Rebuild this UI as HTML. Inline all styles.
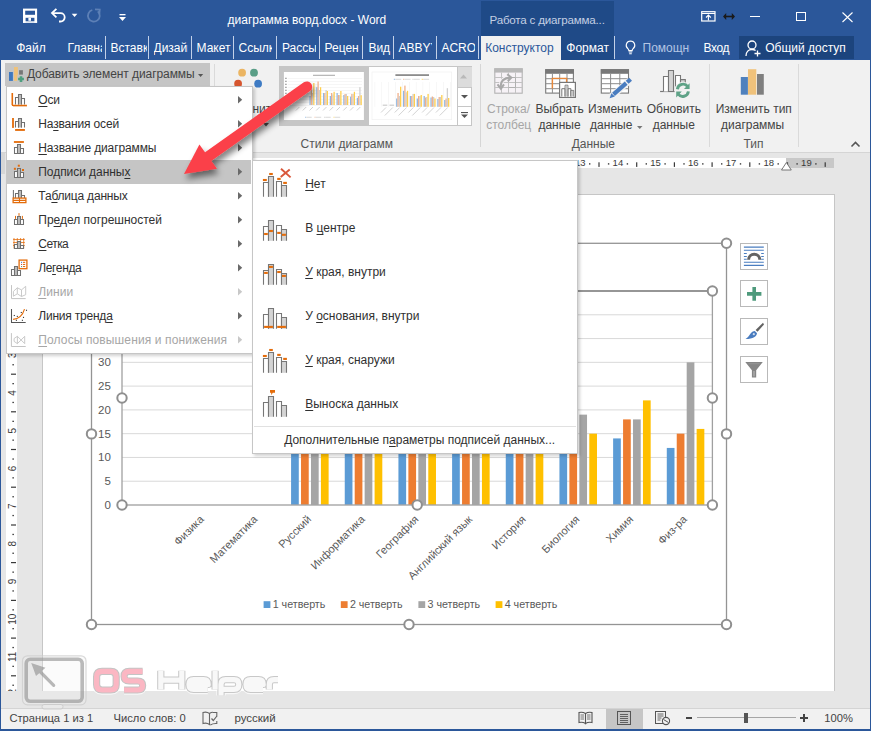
<!DOCTYPE html><html><head><meta charset="utf-8"><style>
html,body{margin:0;padding:0;}
body{width:871px;height:731px;overflow:hidden;position:relative;background:#e6e6e6;font-family:"Liberation Sans",sans-serif;}
.t{position:absolute;white-space:nowrap;font-family:"Liberation Sans",sans-serif;}
svg{overflow:visible}
</style></head><body>
<div style="position:absolute;left:0px;top:0px;width:871px;height:60px;background:#2b579a"></div>
<div style="position:absolute;left:481px;top:1px;width:133px;height:59px;background:#1f4a87"></div>
<div class="t" style="left:489.5px;top:13.88px;font-size:11.6px;line-height:11.6px;color:#c3cfe3;letter-spacing:-0.2px">Работа с диаграмма...</div>
<svg style="position:absolute;left:0px;top:0px;" width="130" height="30" viewBox="0 0 130 30"><rect x="23" y="8.6" width="14.1" height="14.2" fill="#fff"/><rect x="25.2" y="10.7" width="9.8" height="4.1" fill="#2b579a"/><rect x="25.6" y="17.8" width="8.8" height="5" fill="#2b579a"/><rect x="28.4" y="17.8" width="2.6" height="3" fill="#fff"/><rect x="23" y="21.3" width="14.1" height="1.5" fill="#fff"/><path d="M52 13.1 H60.5 A4.2 4.2 0 0 1 60.5 21.5 H59" fill="none" stroke="#fff" stroke-width="1.8"/><path d="M56.4 8.9 L52 13.1 L56.4 17.3" fill="none" stroke="#fff" stroke-width="1.8"/><path d="M71.7 13.8 h5.7 l-2.85 3.1z" fill="#fff"/><path d="M97.8 11.3 A5.9 5.9 0 1 1 92.3 10" fill="none" stroke="#5d80b6" stroke-width="1.8"/><path d="M95 9.4 L99.8 9.6 L99.3 14.3" fill="none" stroke="#5d80b6" stroke-width="1.7"/></svg>
<svg style="position:absolute;left:119px;top:14px;" width="7" height="8" viewBox="0 0 7 8"><rect x="0.5" y="0" width="6" height="1.3" fill="#fff"/><path d="M0 3h7l-3.5 4z" fill="#fff"/></svg>
<div class="t" style="left:227.5px;top:14.04px;font-size:12px;line-height:12px;color:#fff;">диаграмма ворд.docx - Word</div>
<svg style="position:absolute;left:701px;top:11px;" width="15" height="11" viewBox="0 0 15 11"><rect x="0.7" y="0.7" width="13.3" height="9.3" fill="none" stroke="#fff" stroke-width="1.2"/><path d="M1 2.5h13" stroke="#fff" stroke-width="1"/><path d="M7.4 9.5v-5 M5 6.5l2.4-2.4 2.4 2.4" stroke="#fff" stroke-width="1.1" fill="none"/></svg>
<svg style="position:absolute;left:723px;top:12px;" width="12" height="9" viewBox="0 0 12 9"><path d="M2.5 4.5h7" stroke="#1a1a1a" stroke-width="1.6"/><path d="M0 4.5l3.2-3.5v7z M12 4.5l-3.2-3.5v7z" fill="#1a1a1a"/></svg>
<div style="position:absolute;left:749.5px;top:16px;width:10.5px;height:1px;background:#fff"></div>
<div style="position:absolute;left:796px;top:11.5px;width:10px;height:9.5px;border:1px solid #fff;box-sizing:border-box"></div>
<svg style="position:absolute;left:841.5px;top:11.5px;" width="11" height="10" viewBox="0 0 11 10"><path d="M0.5 0.5l10 9.5 M10.5 0.5l-10 9.5" stroke="#fff" stroke-width="1.1"/></svg>
<div class="t" style="left:16.2px;top:41.84px;font-size:12px;line-height:12px;color:#fff;">Файл</div>
<div class="t" style="left:67.4px;top:39.8px;width:34.599999999999994px;overflow:hidden;font-size:12px;line-height:16px;color:#fff">Главная</div>
<div class="t" style="left:110.5px;top:39.8px;width:36.0px;overflow:hidden;font-size:12px;line-height:16px;color:#fff">Вставка</div>
<div class="t" style="left:153.5px;top:39.8px;width:34.0px;overflow:hidden;font-size:12px;line-height:16px;color:#fff">Дизайн</div>
<div class="t" style="left:196.5px;top:39.8px;width:34.5px;overflow:hidden;font-size:12px;line-height:16px;color:#fff">Макет</div>
<div class="t" style="left:238.5px;top:39.8px;width:33.5px;overflow:hidden;font-size:12px;line-height:16px;color:#fff">Ссылки</div>
<div class="t" style="left:282px;top:39.8px;width:33.5px;overflow:hidden;font-size:12px;line-height:16px;color:#fff">Рассылки</div>
<div class="t" style="left:324.5px;top:39.8px;width:34.0px;overflow:hidden;font-size:12px;line-height:16px;color:#fff">Рецензирование</div>
<div class="t" style="left:368.4px;top:41.84px;font-size:12px;line-height:12px;color:#fff;">Вид</div>
<div class="t" style="left:398.4px;top:39.8px;width:33.60000000000002px;overflow:hidden;font-size:12px;line-height:16px;color:#fff">ABBYY FineReader</div>
<div class="t" style="left:441.4px;top:39.8px;width:34.10000000000002px;overflow:hidden;font-size:12px;line-height:16px;color:#fff">ACROBAT</div>
<div style="position:absolute;left:105px;top:36.3px;width:1px;height:22.7px;background:#c3d1e8"></div>
<div style="position:absolute;left:148px;top:36.3px;width:1px;height:22.7px;background:#c3d1e8"></div>
<div style="position:absolute;left:191px;top:36.3px;width:1px;height:22.7px;background:#c3d1e8"></div>
<div style="position:absolute;left:233px;top:36.3px;width:1px;height:22.7px;background:#c3d1e8"></div>
<div style="position:absolute;left:276px;top:36.3px;width:1px;height:22.7px;background:#c3d1e8"></div>
<div style="position:absolute;left:319px;top:36.3px;width:1px;height:22.7px;background:#c3d1e8"></div>
<div style="position:absolute;left:362px;top:36.3px;width:1px;height:22.7px;background:#c3d1e8"></div>
<div style="position:absolute;left:393px;top:36.3px;width:1px;height:22.7px;background:#c3d1e8"></div>
<div style="position:absolute;left:436px;top:36.3px;width:1px;height:22.7px;background:#c3d1e8"></div>
<div style="position:absolute;left:478px;top:36.3px;width:1px;height:22.7px;background:#c3d1e8"></div>
<div style="position:absolute;left:481px;top:36px;width:80px;height:24px;background:#f1f1f1"></div>
<div class="t" style="left:485.2px;top:41.84px;font-size:12px;line-height:12px;color:#2b579a;">Конструктор</div>
<div class="t" style="left:566.3px;top:41.84px;font-size:12px;line-height:12px;color:#fff;">Формат</div>
<div style="position:absolute;left:613.5px;top:36.3px;width:1px;height:22.7px;background:#c3d1e8"></div>
<svg style="position:absolute;left:625px;top:40px;" width="11" height="15" viewBox="0 0 11 15"><path d="M5.5 1a4.3 4.3 0 0 0-2.6 7.7c.6.5.9 1.2.9 1.9h3.4c0-.7.3-1.4.9-1.9A4.3 4.3 0 0 0 5.5 1z" fill="none" stroke="#fff" stroke-width="1.1"/><path d="M3.8 12h3.4M4.2 13.7h2.6" stroke="#fff" stroke-width="1.1"/></svg>
<div class="t" style="left:642.5px;top:39.8px;width:47px;overflow:hidden;font-size:12px;line-height:16px;color:#b4c6e4">Помощник</div>
<div class="t" style="left:703.6px;top:41.84px;font-size:12px;line-height:12px;color:#fff;letter-spacing:-0.45px">Вход</div>
<div style="position:absolute;left:739px;top:36px;width:115px;height:23px;background:#1c447d"></div>
<svg style="position:absolute;left:745px;top:40px;" width="17" height="17" viewBox="0 0 17 17"><circle cx="7" cy="5" r="4" fill="none" stroke="#fff" stroke-width="1.3"/><path d="M1 16c0-4 2.5-6.5 6-6.5 1.5 0 2.7.4 3.6 1.1" fill="none" stroke="#fff" stroke-width="1.3"/><path d="M12.5 10.5v6M9.5 13.5h6" stroke="#fff" stroke-width="1.3"/></svg>
<div class="t" style="left:765.2px;top:41.84px;font-size:12px;line-height:12px;color:#fff;">Общий доступ</div>
<div style="position:absolute;left:1px;top:60px;width:869px;height:92px;background:#f1f1f1"></div>
<div style="position:absolute;left:1px;top:152px;width:869px;height:1px;background:#d5d5d5"></div>
<div style="position:absolute;left:5px;top:63px;width:205px;height:23px;background:#c5c5c5"></div>
<svg style="position:absolute;left:0px;top:0px;" width="60" height="100" viewBox="0 0 60 100"><rect x="9" y="72" width="3.9" height="8.9" fill="#3f78bf"/><rect x="14" y="67" width="3.9" height="13.9" fill="#efc27a"/><rect x="19.1" y="70.2" width="3.8" height="4.4" fill="#777"/><path d="M17.2 75.2h7.6v7.6h-7.6z" fill="#c5c5c5"/><path d="M21 76.2V81.9M18.1 79.05H23.9" stroke="#4f9f80" stroke-width="2.6"/></svg>
<div class="t" style="left:26.9px;top:68.34px;font-size:12px;line-height:12px;color:#444;letter-spacing:-0.07px">Добавить элемент диаграммы</div>
<svg style="position:absolute;left:197.5px;top:74px;" width="6" height="4" viewBox="0 0 6 4"><path d="M0 0h5.2l-2.6 3z" fill="#555"/></svg>
<div style="position:absolute;left:214px;top:64px;width:1px;height:83px;background:#dadada"></div>
<svg style="position:absolute;left:0px;top:0px;" width="300" height="100" viewBox="0 0 300 100"><circle cx="242.1" cy="72.7" r="3.9" fill="#ebb563"/><circle cx="254" cy="72.7" r="3.9" fill="#5a9e87"/><circle cx="238.1" cy="83.7" r="3.9" fill="#d6562f"/><circle cx="258.1" cy="83.7" r="3.9" fill="#3e7bc4"/></svg>
<div class="t" style="left:223.4px;top:102.64px;font-size:12px;line-height:12px;color:#444;">Изменить</div>
<svg style="position:absolute;left:262.5px;top:122.5px;" width="5" height="3.5" viewBox="0 0 5 3.5"><path d="M0 0h6l-3 3.5z" fill="#555"/></svg>
<div style="position:absolute;left:279px;top:66px;width:193px;height:60px;border:1px solid #c6c6c6;box-sizing:border-box;background:#fff"></div>
<div style="position:absolute;left:279.5px;top:66.5px;width:89px;height:59px;background:#c6c6c6"></div>
<svg style="position:absolute;left:0;top:0" width="871" height="731" viewBox="0 0 871 731"><rect x="283.9" y="72" width="80" height="48" fill="#fff"/><rect x="313" y="74.8" width="22" height="0.9" fill="#9a9a9a"/><rect x="288" y="78.2" width="74" height="0.5" fill="#ececec"/><rect x="285" y="77.8" width="1.8" height="0.9" fill="#8a8a8a"/><rect x="288" y="81.2" width="74" height="0.5" fill="#ececec"/><rect x="285" y="80.8" width="1.8" height="0.9" fill="#8a8a8a"/><rect x="288" y="84.2" width="74" height="0.5" fill="#ececec"/><rect x="285" y="83.8" width="1.8" height="0.9" fill="#8a8a8a"/><rect x="288" y="87.2" width="74" height="0.5" fill="#ececec"/><rect x="285" y="86.8" width="1.8" height="0.9" fill="#8a8a8a"/><rect x="288" y="90.2" width="74" height="0.5" fill="#ececec"/><rect x="285" y="89.8" width="1.8" height="0.9" fill="#8a8a8a"/><rect x="288" y="93.2" width="74" height="0.5" fill="#ececec"/><rect x="285" y="92.8" width="1.8" height="0.9" fill="#8a8a8a"/><rect x="288" y="96.2" width="74" height="0.5" fill="#ececec"/><rect x="288" y="99.2" width="74" height="0.5" fill="#ececec"/><rect x="288" y="102.2" width="74" height="0.5" fill="#ececec"/><rect x="288" y="105.2" width="74" height="0.5" fill="#ececec"/><path d="M299.4 107 l-3.5 3.5" stroke="#c4c4c4" stroke-width="0.8"/><path d="M306.2 107 l-3.5 3.5" stroke="#c4c4c4" stroke-width="0.8"/><rect x="309.46" y="96.00" width="1.25" height="9.00" fill="#8fb8e3"/><rect x="310.71" y="87.00" width="1.25" height="18.00" fill="#f2b08a"/><rect x="311.96" y="93.00" width="1.25" height="12.00" fill="#cfcfcf"/><rect x="313.21" y="83.00" width="1.25" height="22.00" fill="#ffcf4d"/><path d="M313.0 107 l-3.5 3.5" stroke="#c4c4c4" stroke-width="0.8"/><rect x="316.22" y="87.20" width="1.25" height="17.80" fill="#8fb8e3"/><rect x="317.47" y="81.50" width="1.25" height="23.50" fill="#f2b08a"/><rect x="318.72" y="90.00" width="1.25" height="15.00" fill="#cfcfcf"/><rect x="319.97" y="87.20" width="1.25" height="17.80" fill="#ffcf4d"/><path d="M319.7 107 l-3.5 3.5" stroke="#c4c4c4" stroke-width="0.8"/><rect x="322.98" y="93.00" width="1.25" height="12.00" fill="#8fb8e3"/><rect x="324.23" y="93.00" width="1.25" height="12.00" fill="#f2b08a"/><rect x="325.48" y="90.00" width="1.25" height="15.00" fill="#cfcfcf"/><rect x="326.73" y="91.00" width="1.25" height="14.00" fill="#ffcf4d"/><path d="M326.5 107 l-3.5 3.5" stroke="#c4c4c4" stroke-width="0.8"/><rect x="329.74" y="96.00" width="1.25" height="9.00" fill="#8fb8e3"/><rect x="330.99" y="93.00" width="1.25" height="12.00" fill="#f2b08a"/><rect x="332.24" y="94.40" width="1.25" height="10.60" fill="#cfcfcf"/><rect x="333.49" y="91.80" width="1.25" height="13.20" fill="#ffcf4d"/><path d="M333.2 107 l-3.5 3.5" stroke="#c4c4c4" stroke-width="0.8"/><rect x="336.50" y="93.00" width="1.25" height="12.00" fill="#8fb8e3"/><rect x="337.75" y="95.00" width="1.25" height="10.00" fill="#f2b08a"/><rect x="339.00" y="95.00" width="1.25" height="10.00" fill="#cfcfcf"/><rect x="340.25" y="91.00" width="1.25" height="14.00" fill="#ffcf4d"/><path d="M340.0 107 l-3.5 3.5" stroke="#c4c4c4" stroke-width="0.8"/><rect x="343.26" y="95.00" width="1.25" height="10.00" fill="#8fb8e3"/><rect x="344.51" y="94.00" width="1.25" height="11.00" fill="#f2b08a"/><rect x="345.76" y="94.00" width="1.25" height="11.00" fill="#cfcfcf"/><rect x="347.01" y="96.00" width="1.25" height="9.00" fill="#ffcf4d"/><path d="M346.8 107 l-3.5 3.5" stroke="#c4c4c4" stroke-width="0.8"/><rect x="350.02" y="96.70" width="1.25" height="8.30" fill="#8fb8e3"/><rect x="351.27" y="94.00" width="1.25" height="11.00" fill="#f2b08a"/><rect x="352.52" y="94.00" width="1.25" height="11.00" fill="#cfcfcf"/><rect x="353.77" y="91.80" width="1.25" height="13.20" fill="#ffcf4d"/><path d="M353.5 107 l-3.5 3.5" stroke="#c4c4c4" stroke-width="0.8"/><rect x="356.78" y="97.80" width="1.25" height="7.20" fill="#8fb8e3"/><rect x="358.03" y="96.00" width="1.25" height="9.00" fill="#f2b08a"/><rect x="359.28" y="87.20" width="1.25" height="17.80" fill="#cfcfcf"/><rect x="360.53" y="95.20" width="1.25" height="9.80" fill="#ffcf4d"/><path d="M360.3 107 l-3.5 3.5" stroke="#c4c4c4" stroke-width="0.8"/><rect x="305.0" y="116.8" width="1" height="0.8" fill="#8fb8e3"/><rect x="306.2" y="116.8" width="5.5" height="0.8" fill="#cfcfcf"/><rect x="314.5" y="116.8" width="1" height="0.8" fill="#f2b08a"/><rect x="315.7" y="116.8" width="5.5" height="0.8" fill="#cfcfcf"/><rect x="324.0" y="116.8" width="1" height="0.8" fill="#cfcfcf"/><rect x="325.2" y="116.8" width="5.5" height="0.8" fill="#cfcfcf"/><rect x="333.5" y="116.8" width="1" height="0.8" fill="#ffcf4d"/><rect x="334.7" y="116.8" width="5.5" height="0.8" fill="#cfcfcf"/><rect x="372" y="72" width="79.7" height="47.7" fill="#fff" stroke="#efefef" stroke-width="0.6"/><rect x="395.4" y="74.2" width="33.6" height="1.8" fill="#8c8c8c"/><rect x="393.8" y="78.8" width="1.2" height="0.9" fill="#8fb8e3"/><rect x="395.2" y="78.8" width="6" height="0.9" fill="#d6d6d6"/><rect x="403.1" y="78.8" width="1.2" height="0.9" fill="#f2b08a"/><rect x="404.5" y="78.8" width="6" height="0.9" fill="#d6d6d6"/><rect x="412.4" y="78.8" width="1.2" height="0.9" fill="#cfcfcf"/><rect x="413.8" y="78.8" width="6" height="0.9" fill="#d6d6d6"/><rect x="421.7" y="78.8" width="1.2" height="0.9" fill="#ffcf4d"/><rect x="423.1" y="78.8" width="6" height="0.9" fill="#d6d6d6"/><rect x="374.7" y="82" width="0.45" height="24.8" fill="#eeeeee"/><rect x="381.6" y="82" width="0.45" height="24.8" fill="#eeeeee"/><rect x="388.4" y="82" width="0.45" height="24.8" fill="#eeeeee"/><rect x="395.3" y="82" width="0.45" height="24.8" fill="#eeeeee"/><rect x="402.1" y="82" width="0.45" height="24.8" fill="#eeeeee"/><rect x="409.0" y="82" width="0.45" height="24.8" fill="#eeeeee"/><rect x="415.9" y="82" width="0.45" height="24.8" fill="#eeeeee"/><rect x="422.7" y="82" width="0.45" height="24.8" fill="#eeeeee"/><rect x="429.6" y="82" width="0.45" height="24.8" fill="#eeeeee"/><rect x="436.4" y="82" width="0.45" height="24.8" fill="#eeeeee"/><rect x="443.3" y="82" width="0.45" height="24.8" fill="#eeeeee"/><rect x="450.2" y="82" width="0.45" height="24.8" fill="#eeeeee"/><rect x="382.7" y="104.8" width="4.6" height="0.6" fill="#9a9a9a"/><path d="M386.0 107.5 l-5 5" stroke="#c8c8c8" stroke-width="0.8"/><rect x="389.5" y="104.8" width="4.6" height="0.6" fill="#9a9a9a"/><path d="M392.8 107.5 l-8 8" stroke="#c8c8c8" stroke-width="0.8"/><rect x="396.11" y="98.50" width="1.3" height="8.30" fill="#8fb8e3"/><rect x="397.41" y="93.00" width="1.3" height="13.80" fill="#f2b08a"/><rect x="398.71" y="96.00" width="1.3" height="10.80" fill="#cfcfcf"/><rect x="400.01" y="86.70" width="1.3" height="20.10" fill="#ffcf4d"/><path d="M399.7 107.5 l-5 5" stroke="#c8c8c8" stroke-width="0.8"/><rect x="402.97" y="90.80" width="1.3" height="16.00" fill="#8fb8e3"/><rect x="404.27" y="85.60" width="1.3" height="21.20" fill="#f2b08a"/><rect x="405.57" y="92.30" width="1.3" height="14.50" fill="#cfcfcf"/><rect x="406.87" y="90.80" width="1.3" height="16.00" fill="#ffcf4d"/><path d="M406.6 107.5 l-8 8" stroke="#c8c8c8" stroke-width="0.8"/><rect x="409.83" y="96.00" width="1.3" height="10.80" fill="#8fb8e3"/><rect x="411.13" y="96.00" width="1.3" height="10.80" fill="#f2b08a"/><rect x="412.43" y="93.90" width="1.3" height="12.90" fill="#cfcfcf"/><rect x="413.73" y="93.90" width="1.3" height="12.90" fill="#ffcf4d"/><path d="M413.4 107.5 l-5 5" stroke="#c8c8c8" stroke-width="0.8"/><rect x="416.69" y="98.50" width="1.3" height="8.30" fill="#8fb8e3"/><rect x="417.99" y="96.00" width="1.3" height="10.80" fill="#f2b08a"/><rect x="419.29" y="96.00" width="1.3" height="10.80" fill="#cfcfcf"/><rect x="420.59" y="95.00" width="1.3" height="11.80" fill="#ffcf4d"/><path d="M420.3 107.5 l-8 8" stroke="#c8c8c8" stroke-width="0.8"/><rect x="423.55" y="96.00" width="1.3" height="10.80" fill="#8fb8e3"/><rect x="424.85" y="97.50" width="1.3" height="9.30" fill="#f2b08a"/><rect x="426.15" y="97.00" width="1.3" height="9.80" fill="#cfcfcf"/><rect x="427.45" y="93.90" width="1.3" height="12.90" fill="#ffcf4d"/><path d="M427.1 107.5 l-5 5" stroke="#c8c8c8" stroke-width="0.8"/><rect x="430.41" y="97.50" width="1.3" height="9.30" fill="#8fb8e3"/><rect x="431.71" y="96.50" width="1.3" height="10.30" fill="#f2b08a"/><rect x="433.01" y="97.00" width="1.3" height="9.80" fill="#cfcfcf"/><rect x="434.31" y="98.50" width="1.3" height="8.30" fill="#ffcf4d"/><path d="M434.0 107.5 l-8 8" stroke="#c8c8c8" stroke-width="0.8"/><rect x="437.27" y="99.00" width="1.3" height="7.80" fill="#8fb8e3"/><rect x="438.57" y="97.00" width="1.3" height="9.80" fill="#f2b08a"/><rect x="439.87" y="97.00" width="1.3" height="9.80" fill="#cfcfcf"/><rect x="441.17" y="95.00" width="1.3" height="11.80" fill="#ffcf4d"/><path d="M440.9 107.5 l-5 5" stroke="#c8c8c8" stroke-width="0.8"/><rect x="444.13" y="100.00" width="1.3" height="6.80" fill="#8fb8e3"/><rect x="445.43" y="98.50" width="1.3" height="8.30" fill="#f2b08a"/><rect x="446.73" y="88.20" width="1.3" height="18.60" fill="#cfcfcf"/><rect x="448.03" y="98.00" width="1.3" height="8.80" fill="#ffcf4d"/><path d="M447.7 107.5 l-8 8" stroke="#c8c8c8" stroke-width="0.8"/></svg>
<div style="position:absolute;left:457px;top:66px;width:15px;height:60px;border-left:1px solid #c6c6c6;box-sizing:border-box"></div>
<div style="position:absolute;left:458px;top:66.5px;width:13.5px;height:20px;background:#dcdcdc"></div>
<div style="position:absolute;left:457px;top:86.5px;width:15px;height:1px;background:#c6c6c6"></div>
<div style="position:absolute;left:457px;top:106px;width:15px;height:1px;background:#c6c6c6"></div>
<svg style="position:absolute;left:460px;top:74px;" width="8" height="5" viewBox="0 0 8 5"><path d="M0 4.5h7l-3.5-4z" fill="#b9b9b9"/></svg>
<svg style="position:absolute;left:461px;top:95px;" width="7" height="4" viewBox="0 0 7 4"><path d="M0 0h7l-3.5 3.5z" fill="#555"/></svg>
<svg style="position:absolute;left:461px;top:112px;" width="7" height="7" viewBox="0 0 7 7"><rect x="0" y="0" width="7" height="1.1" fill="#555"/><path d="M0 2.5h7l-3.5 3.5z" fill="#555"/></svg>
<div class="t" style="left:300.5px;top:137.84px;font-size:12px;line-height:12px;color:#555;">Стили диаграмм</div>
<div style="position:absolute;left:479.5px;top:64px;width:1px;height:83px;background:#d6d6d6"></div>
<svg style="position:absolute;left:0px;top:0px;" width="871" height="731" viewBox="0 0 871 731"><rect x="494.8" y="68.8" width="27.4" height="24.4" fill="#f6f2f6" stroke="#b3b3b3" stroke-width="1.1"/><rect x="494.3" y="68.3" width="28.4" height="4.3" fill="#b8b8b8"/><path d="M501.5 72.6V93.2M508.5 72.6V93.2M515.5 72.6V93.2M494.8 77.5H522.2M494.8 82.5H522.2M494.8 87.5H522.2" stroke="#c2c2c2" stroke-width="1"/><path d="M508.5 77.5H515.5V87.5H508.5" fill="none" stroke="#b0b0b0" stroke-width="1"/><path d="M500.9 87.5 C500 81 504 77.6 510.5 77.6" fill="none" stroke="#f6f2f6" stroke-width="4"/><path d="M500.9 87.5 C500 81 504 77.6 511 77.6" fill="none" stroke="#a8a8a8" stroke-width="2.1"/><path d="M507.2 74.2L511.3 77.6L507.8 81.2M497.5 84.3L500.9 88.7L504 84.3" fill="none" stroke="#a8a8a8" stroke-width="2"/></svg>
<div class="t" style="left:487px;top:103.34px;font-size:12px;line-height:12px;color:#a6a6a6;">Строка/</div>
<div class="t" style="left:486.2px;top:118.84px;font-size:12px;line-height:12px;color:#a6a6a6;">столбец</div>
<svg style="position:absolute;left:0px;top:0px;" width="871" height="731" viewBox="0 0 871 731"><rect x="545.7" y="69.7" width="27.7" height="23.4" fill="#fff" stroke="#7a7a7a" stroke-width="1.1"/><rect x="545.2" y="69.2" width="28.7" height="4.6" fill="#787878"/><path d="M545.7 78.7H573.4M545.7 83.7H573.4M545.7 88.7H573.4M552.4 73.8V93.1M559.7 73.8V93.1M567 73.8V93.1" stroke="#8c8c8c" stroke-width="1"/><path d="M552.4 88.5V78.4H566.6V82" fill="none" stroke="#e8883a" stroke-width="1.4"/><rect x="559.6" y="82.4" width="15.8" height="15" fill="#fff" stroke="#777" stroke-width="1.2"/><path d="M561.8 96.5V88.7H565.1V96.5M565.1 96.5V85.2H567.9V96.5M567.9 96.5V88.7H570.9V96.5M570.9 96.5V90.4H573.7V96.5" fill="#fff" stroke="#777" stroke-width="1"/><rect x="565.6" y="85.7" width="1.8" height="10.8" fill="#c8c8c8"/><rect x="571.4" y="90.9" width="1.8" height="5.6" fill="#c8c8c8"/></svg>
<div class="t" style="left:535.4px;top:103.34px;font-size:12px;line-height:12px;color:#444;">Выбрать</div>
<div class="t" style="left:538.4px;top:118.84px;font-size:12px;line-height:12px;color:#444;">данные</div>
<svg style="position:absolute;left:0px;top:0px;" width="871" height="731" viewBox="0 0 871 731"><rect x="601.3" y="69.7" width="27.2" height="23.4" fill="#fff" stroke="#7a7a7a" stroke-width="1.1"/><rect x="600.8" y="69.2" width="28.2" height="4.6" fill="#787878"/><path d="M601.3 78.7H628.5M601.3 83.7H628.5M601.3 88.7H628.5M610.6 73.8V93.1M619.8 73.8V93.1" stroke="#8c8c8c" stroke-width="1"/><path d="M611.5 96.5L629.5 80.8" stroke="#f1f1f1" stroke-width="6.5"/><path d="M613.5 94.3L626.2 83.2" stroke="#4a7dc0" stroke-width="4.2"/><path d="M627.2 82.3L630.6 79.3" stroke="#4a7dc0" stroke-width="4.2"/><path d="M609.6 98.3L611.4 93.2L614.9 96.6z" fill="#4a7dc0"/></svg>
<div class="t" style="left:588px;top:103.34px;font-size:12px;line-height:12px;color:#444;">Изменить</div>
<div class="t" style="left:590.1px;top:118.84px;font-size:12px;line-height:12px;color:#444;">данные</div>
<svg style="position:absolute;left:636.5px;top:125.5px;" width="6" height="4" viewBox="0 0 6 4"><path d="M0 0h5.5l-2.75 3z" fill="#777"/></svg>
<svg style="position:absolute;left:0px;top:0px;" width="871" height="731" viewBox="0 0 871 731"><path d="M660.1 91.5H675" stroke="#777" stroke-width="1.2"/><path d="M663.5 91.5V76.5H668.5V91.5" fill="#fff" stroke="#777" stroke-width="1.1"/><path d="M668.5 91.5V70.5H673.5V91.5z" fill="#d4d4d4" stroke="#777" stroke-width="1.1"/><path d="M675.5 91.5V75.5H680.5V91.5" fill="#fff" stroke="#777" stroke-width="1.1"/><path d="M680.5 86V79.6H685.3V86" fill="#d4d4d4" stroke="#777" stroke-width="1.1"/><circle cx="682.9" cy="90.3" r="8.6" fill="#f1f1f1"/><path d="M677.4 89.2A5.7 5.7 0 0 1 687.7 86.6" fill="none" stroke="#5fa287" stroke-width="2.9"/><path d="M688.4 91.4A5.7 5.7 0 0 1 678.1 94" fill="none" stroke="#5fa287" stroke-width="2.9"/><path d="M689.6 83.2V89H684z M676.2 97.4V91.6H681.8z" fill="#5fa287"/></svg>
<div class="t" style="left:646.7px;top:103.34px;font-size:12px;line-height:12px;color:#444;">Обновить</div>
<div class="t" style="left:652.7px;top:118.84px;font-size:12px;line-height:12px;color:#444;">данные</div>
<div class="t" style="left:571.7px;top:137.84px;font-size:12px;line-height:12px;color:#555;">Данные</div>
<div style="position:absolute;left:708.5px;top:64px;width:1px;height:83px;background:#dadada"></div>
<svg style="position:absolute;left:740px;top:69px;" width="25" height="26" viewBox="0 0 25 26"><rect x="0.8" y="8" width="7.1" height="17.7" fill="#4f81bd"/><rect x="8" y="0.2" width="8.3" height="25.5" fill="#f0c27b"/><rect x="17" y="5" width="6.8" height="20.7" fill="#7f7f7f"/></svg>
<div class="t" style="left:715.7px;top:102.84px;font-size:12px;line-height:12px;color:#444;">Изменить тип</div>
<div class="t" style="left:721px;top:118.54px;font-size:12px;line-height:12px;color:#444;">диаграммы</div>
<div class="t" style="left:743.4px;top:137.84px;font-size:12px;line-height:12px;color:#555;">Тип</div>
<div style="position:absolute;left:798px;top:64px;width:1px;height:83px;background:#dadada"></div>
<svg style="position:absolute;left:851px;top:141px;" width="9" height="6" viewBox="0 0 9 6"><path d="M0.5 5.5l4-4 4 4" fill="none" stroke="#555" stroke-width="1.6"/></svg>
<div style="position:absolute;left:0px;top:153px;width:871px;height:555px;background:#e6e6e6"></div>
<div style="position:absolute;left:42px;top:158px;width:744px;height:10px;background:#fff"></div>
<div style="position:absolute;left:1.2px;top:152.5px;width:4.3px;height:21.5px;background:#d6d6d6"></div>
<div style="position:absolute;left:786px;top:158px;width:48px;height:10px;background:#c8c8c8"></div>
<div style="position:absolute;left:42px;top:194px;width:792.5px;height:497px;background:#fff;border:1px solid #c6c6c6;box-sizing:border-box;border-bottom:none"></div>
<div style="position:absolute;left:6px;top:153px;width:11px;height:538px;background:#fff"></div>
<div style="position:absolute;left:0px;top:708px;width:871px;height:23px;background:#f1f1f1"></div>
<div style="position:absolute;left:0px;top:708px;width:871px;height:1px;background:#d4d4d4"></div>
<div style="position:absolute;left:0px;top:729px;width:871px;height:2px;background:#2b579a"></div>
<svg style="position:absolute;left:0;top:0" width="871" height="731" viewBox="0 0 871 731"><defs><clipPath id="hrc"><rect x="42" y="158" width="792" height="10"/></clipPath></defs><g clip-path="url(#hrc)"><rect x="98.9" y="163.2" width="1.4" height="1.4" fill="#3a3a3a"/><rect x="108.3" y="162.3" width="1.2" height="4.6" fill="#3a3a3a"/><rect x="117.8" y="163.2" width="1.4" height="1.4" fill="#3a3a3a"/><text x="127.8" y="166.3" font-size="9.5" text-anchor="middle" fill="#3a3a3a" font-family="Liberation Sans">1</text><rect x="136.6" y="163.2" width="1.4" height="1.4" fill="#3a3a3a"/><rect x="146.0" y="162.3" width="1.2" height="4.6" fill="#3a3a3a"/><rect x="155.5" y="163.2" width="1.4" height="1.4" fill="#3a3a3a"/><text x="165.5" y="166.3" font-size="9.5" text-anchor="middle" fill="#3a3a3a" font-family="Liberation Sans">2</text><rect x="174.3" y="163.2" width="1.4" height="1.4" fill="#3a3a3a"/><rect x="183.7" y="162.3" width="1.2" height="4.6" fill="#3a3a3a"/><rect x="193.2" y="163.2" width="1.4" height="1.4" fill="#3a3a3a"/><text x="203.2" y="166.3" font-size="9.5" text-anchor="middle" fill="#3a3a3a" font-family="Liberation Sans">3</text><rect x="212.0" y="163.2" width="1.4" height="1.4" fill="#3a3a3a"/><rect x="221.4" y="162.3" width="1.2" height="4.6" fill="#3a3a3a"/><rect x="230.9" y="163.2" width="1.4" height="1.4" fill="#3a3a3a"/><text x="240.9" y="166.3" font-size="9.5" text-anchor="middle" fill="#3a3a3a" font-family="Liberation Sans">4</text><rect x="249.7" y="163.2" width="1.4" height="1.4" fill="#3a3a3a"/><rect x="259.1" y="162.3" width="1.2" height="4.6" fill="#3a3a3a"/><rect x="268.6" y="163.2" width="1.4" height="1.4" fill="#3a3a3a"/><text x="278.6" y="166.3" font-size="9.5" text-anchor="middle" fill="#3a3a3a" font-family="Liberation Sans">5</text><rect x="287.4" y="163.2" width="1.4" height="1.4" fill="#3a3a3a"/><rect x="296.8" y="162.3" width="1.2" height="4.6" fill="#3a3a3a"/><rect x="306.3" y="163.2" width="1.4" height="1.4" fill="#3a3a3a"/><text x="316.3" y="166.3" font-size="9.5" text-anchor="middle" fill="#3a3a3a" font-family="Liberation Sans">6</text><rect x="325.1" y="163.2" width="1.4" height="1.4" fill="#3a3a3a"/><rect x="334.5" y="162.3" width="1.2" height="4.6" fill="#3a3a3a"/><rect x="344.0" y="163.2" width="1.4" height="1.4" fill="#3a3a3a"/><text x="354.0" y="166.3" font-size="9.5" text-anchor="middle" fill="#3a3a3a" font-family="Liberation Sans">7</text><rect x="362.8" y="163.2" width="1.4" height="1.4" fill="#3a3a3a"/><rect x="372.2" y="162.3" width="1.2" height="4.6" fill="#3a3a3a"/><rect x="381.7" y="163.2" width="1.4" height="1.4" fill="#3a3a3a"/><text x="391.7" y="166.3" font-size="9.5" text-anchor="middle" fill="#3a3a3a" font-family="Liberation Sans">8</text><rect x="400.5" y="163.2" width="1.4" height="1.4" fill="#3a3a3a"/><rect x="409.9" y="162.3" width="1.2" height="4.6" fill="#3a3a3a"/><rect x="419.4" y="163.2" width="1.4" height="1.4" fill="#3a3a3a"/><text x="429.4" y="166.3" font-size="9.5" text-anchor="middle" fill="#3a3a3a" font-family="Liberation Sans">9</text><rect x="438.2" y="163.2" width="1.4" height="1.4" fill="#3a3a3a"/><rect x="447.6" y="162.3" width="1.2" height="4.6" fill="#3a3a3a"/><rect x="457.1" y="163.2" width="1.4" height="1.4" fill="#3a3a3a"/><text x="467.1" y="166.3" font-size="9.5" text-anchor="middle" fill="#3a3a3a" font-family="Liberation Sans">10</text><rect x="475.9" y="163.2" width="1.4" height="1.4" fill="#3a3a3a"/><rect x="485.3" y="162.3" width="1.2" height="4.6" fill="#3a3a3a"/><rect x="494.8" y="163.2" width="1.4" height="1.4" fill="#3a3a3a"/><text x="504.8" y="166.3" font-size="9.5" text-anchor="middle" fill="#3a3a3a" font-family="Liberation Sans">11</text><rect x="513.6" y="163.2" width="1.4" height="1.4" fill="#3a3a3a"/><rect x="523.0" y="162.3" width="1.2" height="4.6" fill="#3a3a3a"/><rect x="532.5" y="163.2" width="1.4" height="1.4" fill="#3a3a3a"/><text x="542.5" y="166.3" font-size="9.5" text-anchor="middle" fill="#3a3a3a" font-family="Liberation Sans">12</text><rect x="551.3" y="163.2" width="1.4" height="1.4" fill="#3a3a3a"/><rect x="560.8" y="162.3" width="1.2" height="4.6" fill="#3a3a3a"/><rect x="570.2" y="163.2" width="1.4" height="1.4" fill="#3a3a3a"/><text x="580.2" y="166.3" font-size="9.5" text-anchor="middle" fill="#3a3a3a" font-family="Liberation Sans">13</text><rect x="589.0" y="163.2" width="1.4" height="1.4" fill="#3a3a3a"/><rect x="598.4" y="162.3" width="1.2" height="4.6" fill="#3a3a3a"/><rect x="607.9" y="163.2" width="1.4" height="1.4" fill="#3a3a3a"/><text x="617.9" y="166.3" font-size="9.5" text-anchor="middle" fill="#3a3a3a" font-family="Liberation Sans">14</text><rect x="626.7" y="163.2" width="1.4" height="1.4" fill="#3a3a3a"/><rect x="636.1" y="162.3" width="1.2" height="4.6" fill="#3a3a3a"/><rect x="645.6" y="163.2" width="1.4" height="1.4" fill="#3a3a3a"/><text x="655.6" y="166.3" font-size="9.5" text-anchor="middle" fill="#3a3a3a" font-family="Liberation Sans">15</text><rect x="664.4" y="163.2" width="1.4" height="1.4" fill="#3a3a3a"/><rect x="673.8" y="162.3" width="1.2" height="4.6" fill="#3a3a3a"/><rect x="683.3" y="163.2" width="1.4" height="1.4" fill="#3a3a3a"/><text x="693.3" y="166.3" font-size="9.5" text-anchor="middle" fill="#3a3a3a" font-family="Liberation Sans">16</text><rect x="702.1" y="163.2" width="1.4" height="1.4" fill="#3a3a3a"/><rect x="711.5" y="162.3" width="1.2" height="4.6" fill="#3a3a3a"/><rect x="721.0" y="163.2" width="1.4" height="1.4" fill="#3a3a3a"/><text x="731.0" y="166.3" font-size="9.5" text-anchor="middle" fill="#3a3a3a" font-family="Liberation Sans">17</text><rect x="739.8" y="163.2" width="1.4" height="1.4" fill="#3a3a3a"/><rect x="749.2" y="162.3" width="1.2" height="4.6" fill="#3a3a3a"/><rect x="758.7" y="163.2" width="1.4" height="1.4" fill="#3a3a3a"/><text x="768.7" y="166.3" font-size="9.5" text-anchor="middle" fill="#3a3a3a" font-family="Liberation Sans">18</text><rect x="777.5" y="163.2" width="1.4" height="1.4" fill="#3a3a3a"/><rect x="786.9" y="162.3" width="1.2" height="4.6" fill="#3a3a3a"/><rect x="796.4" y="163.2" width="1.4" height="1.4" fill="#3a3a3a"/><text x="806.4" y="166.3" font-size="9.5" text-anchor="middle" fill="#3a3a3a" font-family="Liberation Sans">19</text><rect x="815.2" y="163.2" width="1.4" height="1.4" fill="#3a3a3a"/><rect x="824.6" y="162.3" width="1.2" height="4.6" fill="#3a3a3a"/><rect x="834.1" y="163.2" width="1.4" height="1.4" fill="#3a3a3a"/></g><path d="M781.5 170 L786.4 162.5 L791.3 170z" fill="#fff" stroke="#6a6a6a" stroke-width="0.9"/></svg>
<svg style="position:absolute;left:0;top:0" width="871" height="731" viewBox="0 0 871 731"><defs><clipPath id="vrc"><rect x="6" y="168" width="11" height="523"/></clipPath></defs><g clip-path="url(#vrc)"><rect x="12.4" y="251.0" width="1.5" height="1.3" fill="#3a3a3a"/><rect x="11" y="260.4" width="5" height="1.2" fill="#3a3a3a"/><rect x="12.4" y="269.9" width="1.5" height="1.3" fill="#3a3a3a"/><text x="0" y="0" font-size="10" text-anchor="middle" fill="#3a3a3a" font-family="Liberation Sans" transform="translate(16.3 279.9) rotate(-90)">1</text><rect x="12.4" y="288.7" width="1.5" height="1.3" fill="#3a3a3a"/><rect x="11" y="298.1" width="5" height="1.2" fill="#3a3a3a"/><rect x="12.4" y="307.6" width="1.5" height="1.3" fill="#3a3a3a"/><text x="0" y="0" font-size="10" text-anchor="middle" fill="#3a3a3a" font-family="Liberation Sans" transform="translate(16.3 317.6) rotate(-90)">2</text><rect x="12.4" y="326.4" width="1.5" height="1.3" fill="#3a3a3a"/><rect x="11" y="335.9" width="5" height="1.2" fill="#3a3a3a"/><rect x="12.4" y="345.3" width="1.5" height="1.3" fill="#3a3a3a"/><text x="0" y="0" font-size="10" text-anchor="middle" fill="#3a3a3a" font-family="Liberation Sans" transform="translate(16.3 355.3) rotate(-90)">3</text><rect x="12.4" y="364.1" width="1.5" height="1.3" fill="#3a3a3a"/><rect x="11" y="373.6" width="5" height="1.2" fill="#3a3a3a"/><rect x="12.4" y="383.0" width="1.5" height="1.3" fill="#3a3a3a"/><text x="0" y="0" font-size="10" text-anchor="middle" fill="#3a3a3a" font-family="Liberation Sans" transform="translate(16.3 393.0) rotate(-90)">4</text><rect x="12.4" y="401.8" width="1.5" height="1.3" fill="#3a3a3a"/><rect x="11" y="411.2" width="5" height="1.2" fill="#3a3a3a"/><rect x="12.4" y="420.7" width="1.5" height="1.3" fill="#3a3a3a"/><text x="0" y="0" font-size="10" text-anchor="middle" fill="#3a3a3a" font-family="Liberation Sans" transform="translate(16.3 430.7) rotate(-90)">5</text><rect x="12.4" y="439.5" width="1.5" height="1.3" fill="#3a3a3a"/><rect x="11" y="448.9" width="5" height="1.2" fill="#3a3a3a"/><rect x="12.4" y="458.4" width="1.5" height="1.3" fill="#3a3a3a"/><text x="0" y="0" font-size="10" text-anchor="middle" fill="#3a3a3a" font-family="Liberation Sans" transform="translate(16.3 468.4) rotate(-90)">6</text><rect x="12.4" y="477.2" width="1.5" height="1.3" fill="#3a3a3a"/><rect x="11" y="486.6" width="5" height="1.2" fill="#3a3a3a"/><rect x="12.4" y="496.1" width="1.5" height="1.3" fill="#3a3a3a"/><text x="0" y="0" font-size="10" text-anchor="middle" fill="#3a3a3a" font-family="Liberation Sans" transform="translate(16.3 506.1) rotate(-90)">7</text><rect x="12.4" y="514.9" width="1.5" height="1.3" fill="#3a3a3a"/><rect x="11" y="524.4" width="5" height="1.2" fill="#3a3a3a"/><rect x="12.4" y="533.8" width="1.5" height="1.3" fill="#3a3a3a"/><text x="0" y="0" font-size="10" text-anchor="middle" fill="#3a3a3a" font-family="Liberation Sans" transform="translate(16.3 543.8) rotate(-90)">8</text><rect x="12.4" y="552.6" width="1.5" height="1.3" fill="#3a3a3a"/><rect x="11" y="562.0" width="5" height="1.2" fill="#3a3a3a"/><rect x="12.4" y="571.5" width="1.5" height="1.3" fill="#3a3a3a"/><text x="0" y="0" font-size="10" text-anchor="middle" fill="#3a3a3a" font-family="Liberation Sans" transform="translate(16.3 581.5) rotate(-90)">9</text><rect x="12.4" y="590.3" width="1.5" height="1.3" fill="#3a3a3a"/><rect x="11" y="599.8" width="5" height="1.2" fill="#3a3a3a"/><rect x="12.4" y="609.2" width="1.5" height="1.3" fill="#3a3a3a"/><text x="0" y="0" font-size="10" text-anchor="middle" fill="#3a3a3a" font-family="Liberation Sans" transform="translate(16.3 619.2) rotate(-90)">10</text><rect x="12.4" y="628.0" width="1.5" height="1.3" fill="#3a3a3a"/><rect x="11" y="637.5" width="5" height="1.2" fill="#3a3a3a"/><rect x="12.4" y="646.9" width="1.5" height="1.3" fill="#3a3a3a"/><text x="0" y="0" font-size="10" text-anchor="middle" fill="#3a3a3a" font-family="Liberation Sans" transform="translate(16.3 656.9) rotate(-90)">11</text><rect x="12.4" y="665.7" width="1.5" height="1.3" fill="#3a3a3a"/><rect x="11" y="675.2" width="5" height="1.2" fill="#3a3a3a"/><rect x="12.4" y="684.6" width="1.5" height="1.3" fill="#3a3a3a"/><text x="0" y="0" font-size="10" text-anchor="middle" fill="#3a3a3a" font-family="Liberation Sans" transform="translate(16.3 694.6) rotate(-90)">12</text><rect x="12.4" y="703.4" width="1.5" height="1.3" fill="#3a3a3a"/><rect x="11" y="712.9" width="5" height="1.2" fill="#3a3a3a"/><rect x="12.4" y="722.3" width="1.5" height="1.3" fill="#3a3a3a"/></g></svg>
<svg style="position:absolute;left:0;top:0" width="871" height="731" viewBox="0 0 871 731"><rect x="122.0" y="480.72" width="590.4" height="1" fill="#d9d9d9"/><rect x="122.0" y="456.94" width="590.4" height="1" fill="#d9d9d9"/><rect x="122.0" y="433.17" width="590.4" height="1" fill="#d9d9d9"/><rect x="122.0" y="409.39" width="590.4" height="1" fill="#d9d9d9"/><rect x="122.0" y="385.61" width="590.4" height="1" fill="#d9d9d9"/><rect x="122.0" y="361.83" width="590.4" height="1" fill="#d9d9d9"/><rect x="122.0" y="338.06" width="590.4" height="1" fill="#d9d9d9"/><rect x="122.0" y="314.28" width="590.4" height="1" fill="#d9d9d9"/><rect x="122.0" y="290.50" width="590.4" height="1" fill="#d9d9d9"/><text x="110.8" y="509.00" font-size="11.5" text-anchor="end" fill="#595959" font-family="Liberation Sans">0</text><text x="110.8" y="485.22" font-size="11.5" text-anchor="end" fill="#595959" font-family="Liberation Sans">5</text><text x="110.8" y="461.44" font-size="11.5" text-anchor="end" fill="#595959" font-family="Liberation Sans">10</text><text x="110.8" y="437.67" font-size="11.5" text-anchor="end" fill="#595959" font-family="Liberation Sans">15</text><text x="110.8" y="413.89" font-size="11.5" text-anchor="end" fill="#595959" font-family="Liberation Sans">20</text><text x="110.8" y="390.11" font-size="11.5" text-anchor="end" fill="#595959" font-family="Liberation Sans">25</text><text x="110.8" y="366.33" font-size="11.5" text-anchor="end" fill="#595959" font-family="Liberation Sans">30</text><rect x="291.08" y="409.89" width="7.7" height="95.11" fill="#5b9bd5"/><rect x="301.03" y="386.11" width="7.7" height="118.89" fill="#ed7d31"/><rect x="310.98" y="419.40" width="7.7" height="85.60" fill="#a5a5a5"/><rect x="320.93" y="400.38" width="7.7" height="104.62" fill="#ffc000"/><rect x="344.75" y="424.16" width="7.7" height="80.84" fill="#5b9bd5"/><rect x="354.70" y="409.89" width="7.7" height="95.11" fill="#ed7d31"/><rect x="364.65" y="428.91" width="7.7" height="76.09" fill="#a5a5a5"/><rect x="374.60" y="433.67" width="7.7" height="71.33" fill="#ffc000"/><rect x="398.43" y="428.91" width="7.7" height="76.09" fill="#5b9bd5"/><rect x="408.38" y="428.91" width="7.7" height="76.09" fill="#ed7d31"/><rect x="418.32" y="433.67" width="7.7" height="71.33" fill="#a5a5a5"/><rect x="428.28" y="438.42" width="7.7" height="66.58" fill="#ffc000"/><rect x="452.10" y="433.67" width="7.7" height="71.33" fill="#5b9bd5"/><rect x="462.05" y="438.42" width="7.7" height="66.58" fill="#ed7d31"/><rect x="472.00" y="428.91" width="7.7" height="76.09" fill="#a5a5a5"/><rect x="481.95" y="443.18" width="7.7" height="61.82" fill="#ffc000"/><rect x="505.77" y="433.67" width="7.7" height="71.33" fill="#5b9bd5"/><rect x="515.72" y="428.91" width="7.7" height="76.09" fill="#ed7d31"/><rect x="525.67" y="438.42" width="7.7" height="66.58" fill="#a5a5a5"/><rect x="535.62" y="433.67" width="7.7" height="71.33" fill="#ffc000"/><rect x="559.44" y="443.18" width="7.7" height="61.82" fill="#5b9bd5"/><rect x="569.39" y="433.67" width="7.7" height="71.33" fill="#ed7d31"/><rect x="579.34" y="414.64" width="7.7" height="90.36" fill="#a5a5a5"/><rect x="589.29" y="433.67" width="7.7" height="71.33" fill="#ffc000"/><rect x="613.12" y="438.42" width="7.7" height="66.58" fill="#5b9bd5"/><rect x="623.07" y="419.40" width="7.7" height="85.60" fill="#ed7d31"/><rect x="633.02" y="419.40" width="7.7" height="85.60" fill="#a5a5a5"/><rect x="642.97" y="400.38" width="7.7" height="104.62" fill="#ffc000"/><rect x="666.79" y="447.93" width="7.7" height="57.07" fill="#5b9bd5"/><rect x="676.74" y="433.67" width="7.7" height="71.33" fill="#ed7d31"/><rect x="686.69" y="362.33" width="7.7" height="142.67" fill="#a5a5a5"/><rect x="696.64" y="428.91" width="7.7" height="76.09" fill="#ffc000"/><text x="0" y="0" font-size="11" text-anchor="end" fill="#595959" font-family="Liberation Sans" transform="translate(204.5 520) rotate(-45)">Физика</text><text x="0" y="0" font-size="11" text-anchor="end" fill="#595959" font-family="Liberation Sans" transform="translate(258.2 520) rotate(-45)">Математика</text><text x="0" y="0" font-size="11" text-anchor="end" fill="#595959" font-family="Liberation Sans" transform="translate(311.9 520) rotate(-45)">Русский</text><text x="0" y="0" font-size="11" text-anchor="end" fill="#595959" font-family="Liberation Sans" transform="translate(365.5 520) rotate(-45)">Информатика</text><text x="0" y="0" font-size="11" text-anchor="end" fill="#595959" font-family="Liberation Sans" transform="translate(419.2 520) rotate(-45)">География</text><text x="0" y="0" font-size="11" text-anchor="end" fill="#595959" font-family="Liberation Sans" transform="translate(472.9 520) rotate(-45)">Английский язык</text><text x="0" y="0" font-size="11" text-anchor="end" fill="#595959" font-family="Liberation Sans" transform="translate(526.5 520) rotate(-45)">История</text><text x="0" y="0" font-size="11" text-anchor="end" fill="#595959" font-family="Liberation Sans" transform="translate(580.2 520) rotate(-45)">Биология</text><text x="0" y="0" font-size="11" text-anchor="end" fill="#595959" font-family="Liberation Sans" transform="translate(633.9 520) rotate(-45)">Химия</text><text x="0" y="0" font-size="11" text-anchor="end" fill="#595959" font-family="Liberation Sans" transform="translate(687.6 520) rotate(-45)">Физ-ра</text><rect x="122.0" y="504.3" width="590.4" height="1.4" fill="#a6a6a6"/><rect x="263.6" y="601.2" width="6.8" height="6.8" fill="#5b9bd5"/><text x="272.7" y="608.3" font-size="10.7" fill="#595959" font-family="Liberation Sans">1 четверть</text><rect x="340.8" y="601.2" width="6.8" height="6.8" fill="#ed7d31"/><text x="349.9" y="608.3" font-size="10.7" fill="#595959" font-family="Liberation Sans">2 четверть</text><rect x="418.4" y="601.2" width="6.8" height="6.8" fill="#a5a5a5"/><text x="427.5" y="608.3" font-size="10.7" fill="#595959" font-family="Liberation Sans">3 четверть</text><rect x="495.6" y="601.2" width="6.8" height="6.8" fill="#ffc000"/><text x="504.7" y="608.3" font-size="10.7" fill="#595959" font-family="Liberation Sans">4 четверть</text><path d="M122.0 505.0 V291.0 H712.4 V505.0" fill="none" stroke="#a0a0a0" stroke-width="1.3"/><path d="M122.0 291.0 H712.4" fill="none" stroke="#8c8c8c" stroke-width="1.3"/><rect x="91.5" y="243.3" width="635.0" height="381.2" fill="none" stroke="#949494" stroke-width="1.3"/><circle cx="122.0" cy="291.0" r="4.7" fill="#fff" stroke="#8f8f8f" stroke-width="2"/><circle cx="417.2" cy="291.0" r="4.7" fill="#fff" stroke="#8f8f8f" stroke-width="2"/><circle cx="712.4" cy="291.0" r="4.7" fill="#fff" stroke="#8f8f8f" stroke-width="2"/><circle cx="122.0" cy="398.0" r="4.7" fill="#fff" stroke="#8f8f8f" stroke-width="2"/><circle cx="712.4" cy="398.0" r="4.7" fill="#fff" stroke="#8f8f8f" stroke-width="2"/><circle cx="122.0" cy="505.0" r="4.7" fill="#fff" stroke="#8f8f8f" stroke-width="2"/><circle cx="417.2" cy="505.0" r="4.7" fill="#fff" stroke="#8f8f8f" stroke-width="2"/><circle cx="712.4" cy="505.0" r="4.7" fill="#fff" stroke="#8f8f8f" stroke-width="2"/><circle cx="91.5" cy="243.3" r="4.7" fill="#fff" stroke="#8f8f8f" stroke-width="2"/><circle cx="409.0" cy="243.3" r="4.7" fill="#fff" stroke="#8f8f8f" stroke-width="2"/><circle cx="726.5" cy="243.3" r="4.7" fill="#fff" stroke="#8f8f8f" stroke-width="2"/><circle cx="91.5" cy="433.9" r="4.7" fill="#fff" stroke="#8f8f8f" stroke-width="2"/><circle cx="726.5" cy="433.9" r="4.7" fill="#fff" stroke="#8f8f8f" stroke-width="2"/><circle cx="91.5" cy="624.5" r="4.7" fill="#fff" stroke="#8f8f8f" stroke-width="2"/><circle cx="409.0" cy="624.5" r="4.7" fill="#fff" stroke="#8f8f8f" stroke-width="2"/><circle cx="726.5" cy="624.5" r="4.7" fill="#fff" stroke="#8f8f8f" stroke-width="2"/></svg>
<div style="position:absolute;left:740.2px;top:242.5px;width:27.5px;height:27px;border:1px solid #b9b9b9;box-sizing:border-box;background:#fff"></div>
<div style="position:absolute;left:740.2px;top:280.4px;width:27.5px;height:27px;border:1px solid #b9b9b9;box-sizing:border-box;background:#fff"></div>
<div style="position:absolute;left:740.2px;top:318.3px;width:27.5px;height:27px;border:1px solid #b9b9b9;box-sizing:border-box;background:#fff"></div>
<div style="position:absolute;left:740.2px;top:356.2px;width:27.5px;height:27px;border:1px solid #b9b9b9;box-sizing:border-box;background:#fff"></div>
<svg style="position:absolute;left:0px;top:0px;" width="871" height="731" viewBox="0 0 871 731"><path d="M743.9 247.1H763.8M743.9 250.3H763.8M743.9 253.5H746.8M761.2 253.5H763.8M743.9 256.5H746.8M761.2 256.5H763.8M743.9 259.3H746.8M761.2 259.3H763.8M743.9 262.2H763.8M743.9 265.4H763.8" stroke="#4a7dc0" stroke-width="1.1"/><path d="M748.6 259.8 A5.6 5.6 0 0 1 759.8 259.8" fill="none" stroke="#636363" stroke-width="3"/><path d="M754.2 287V300.7M747 293.85H761.4" stroke="#4e9a7c" stroke-width="3.6"/><path d="M763 322.8 L764 324.5 L757.5 331.8 L755.6 330z" fill="#626262"/><path d="M754.8 331 L757 333.2 C756.5 336.5 753.5 338.8 745.5 339 C748 337.5 749.5 335 751 333 C752 331.8 753.5 331.2 754.8 331z" fill="#4a7dc0"/><circle cx="753.8" cy="334.2" r="1.1" fill="#cfdcec"/><path d="M745.3 362 H762.8 L756.2 370.2 V377.4 H751.9 V370.2z" fill="#858585"/><path d="M748.5 363.7 H759.6" stroke="#9a9a9a" stroke-width="0.8"/><path d="M754 371 V376.4" stroke="#bdbdbd" stroke-width="1"/></svg>
<div class="t" style="left:9.4px;top:712.82px;font-size:11.2px;line-height:11.2px;color:#444;">Страница 1 из 1</div>
<div class="t" style="left:113.5px;top:712.82px;font-size:11.2px;line-height:11.2px;color:#444;">Число слов: 0</div>
<svg style="position:absolute;left:202px;top:711px;" width="16" height="14" viewBox="0 0 16 14"><path d="M1 1.5c2.5-.8 4.5-.5 6.5 1v11c-2-1.5-4-1.8-6.5-1z M7.5 2.5c1.2-.9 2.3-1.2 3.5-1.2" fill="none" stroke="#666" stroke-width="1.1"/><path d="M7.5 13.5v-2" stroke="#666" stroke-width="1.1"/><path d="M9.5 7.5l1.8 2 3.6-4.5" fill="none" stroke="#666" stroke-width="1.2"/><path d="M11 1.5h3.8v4 M14.8 10v2.5c-2.2-.2-4.5.2-6.5 1.5" fill="none" stroke="#666" stroke-width="1.1"/></svg>
<div class="t" style="left:234.4px;top:712.57px;font-size:11.5px;line-height:11.5px;color:#444;">русский</div>
<svg style="position:absolute;left:578px;top:711px;" width="15" height="13" viewBox="0 0 15 13"><path d="M1 1.5c2.4-.6 4.5-.3 6.5 1v10c-2-1.3-4.1-1.6-6.5-1z M7.5 2.5c2-1.3 4.1-1.6 6.5-1v10c-2.4-.6-4.5-.3-6.5 1z" fill="none" stroke="#555" stroke-width="1.1"/><path d="M2.5 4h3.5M2.5 6h3.5M2.5 8h3.5M9 4h3.5M9 6h3.5M9 8h3.5" stroke="#555" stroke-width="0.8"/></svg>
<div style="position:absolute;left:605.5px;top:709px;width:37.5px;height:20px;background:#c6c6c6"></div>
<svg style="position:absolute;left:617px;top:711px;" width="14" height="14" viewBox="0 0 14 14"><rect x="0.5" y="0.5" width="13" height="13" fill="none" stroke="#555" stroke-width="1"/><path d="M3 3.5h8M3 5.5h8M3 7.5h8M3 9.5h8M3 11.5h8" stroke="#555" stroke-width="0.9"/></svg>
<svg style="position:absolute;left:655px;top:711px;" width="15" height="14" viewBox="0 0 15 14"><rect x="0.5" y="0.5" width="10" height="12" fill="none" stroke="#555" stroke-width="1"/><path d="M2.5 3h6M2.5 5h6M2.5 7h4M2.5 9h3" stroke="#555" stroke-width="0.9"/><circle cx="11" cy="10" r="3.6" fill="#f1f1f1" stroke="#555" stroke-width="1.1"/><path d="M8.5 8.5l5 3" stroke="#555" stroke-width="1"/></svg>
<div style="position:absolute;left:686px;top:717px;width:6px;height:1.6px;background:#444"></div>
<div style="position:absolute;left:696.5px;top:717.3px;width:99.5px;height:1px;background:#a6a6a6"></div>
<div style="position:absolute;left:744px;top:712.5px;width:3.5px;height:10px;background:#555"></div>
<div style="position:absolute;left:800px;top:717px;width:8px;height:1.6px;background:#444"></div>
<div style="position:absolute;left:803.2px;top:713.8px;width:1.6px;height:8px;background:#444"></div>
<div class="t" style="left:824.3px;top:712.82px;font-size:11.2px;line-height:11.2px;color:#444;">100%</div>
<div style="position:absolute;left:5.5px;top:86px;width:247px;height:267.5px;background:#fff;border:1px solid #c6c6c6;box-sizing:border-box;box-shadow:2px 2px 3px rgba(0,0,0,0.18)"></div>
<div style="position:absolute;left:7px;top:160px;width:244px;height:24px;background:#c5c5c5"></div>
<div class="t" style="left:38.3px;top:94.24px;font-size:12px;line-height:12px;color:#303030;letter-spacing:-0.233px"><span style="text-decoration:underline;text-underline-offset:2px">О</span>си</div>
<svg style="position:absolute;left:8px;top:88px;" width="22" height="24" viewBox="0 0 22 24"><rect x="7.5" y="9.5" width="3.00" height="7.00" fill="#fff"/><path d="M7.5 16.5V9.5H10.5V16.5" fill="none" stroke="#707070" stroke-width="1.05"/><rect x="10.5" y="6.5" width="3.00" height="10.00" fill="#bdbdbd"/><path d="M10.5 16.5V6.5H13.5V16.5" fill="none" stroke="#707070" stroke-width="1.05"/><rect x="13.5" y="10.5" width="3.00" height="6.00" fill="#fff"/><path d="M13.5 16.5V10.5H16.5V16.5" fill="none" stroke="#707070" stroke-width="1.05"/><path d="M4.5 5V17.3H18.9" fill="none" stroke="#e46c0a" stroke-width="1.2"/><path d="M3 6H4.5" stroke="#e46c0a" stroke-width="0.9"/><path d="M3 8H4.5" stroke="#e46c0a" stroke-width="0.9"/><path d="M3 10H4.5" stroke="#e46c0a" stroke-width="0.9"/><path d="M3 12H4.5" stroke="#e46c0a" stroke-width="0.9"/><path d="M3 14H4.5" stroke="#e46c0a" stroke-width="0.9"/><path d="M3 16H4.5" stroke="#e46c0a" stroke-width="0.9"/><path d="M6 17.3V18.8" stroke="#e46c0a" stroke-width="0.9"/><path d="M8 17.3V18.8" stroke="#e46c0a" stroke-width="0.9"/><path d="M10 17.3V18.8" stroke="#e46c0a" stroke-width="0.9"/><path d="M12 17.3V18.8" stroke="#e46c0a" stroke-width="0.9"/><path d="M14 17.3V18.8" stroke="#e46c0a" stroke-width="0.9"/><path d="M16 17.3V18.8" stroke="#e46c0a" stroke-width="0.9"/><path d="M18 17.3V18.8" stroke="#e46c0a" stroke-width="0.9"/></svg>
<svg style="position:absolute;left:238.3px;top:96.2px;" width="5" height="8" viewBox="0 0 5 8"><path d="M0 0l4.2 3.8L0 7.6z" fill="#6a6a6a"/></svg>
<div class="t" style="left:38.3px;top:118.24px;font-size:12px;line-height:12px;color:#303030;letter-spacing:-0.169px">На<span style="text-decoration:underline;text-underline-offset:2px">з</span>вания осей</div>
<svg style="position:absolute;left:8px;top:112px;" width="22" height="24" viewBox="0 0 22 24"><rect x="4.1" y="6" width="1.8" height="9.9" fill="#e46c0a"/><rect x="7.5" y="9.5" width="3.00" height="6.00" fill="#fff"/><path d="M7.5 15.5V9.5H10.5V15.5" fill="none" stroke="#707070" stroke-width="1.05"/><rect x="10.5" y="6.5" width="3.00" height="9.00" fill="#bdbdbd"/><path d="M10.5 15.5V6.5H13.5V15.5" fill="none" stroke="#707070" stroke-width="1.05"/><rect x="13.5" y="10.5" width="3.00" height="5.00" fill="#fff"/><path d="M13.5 15.5V10.5H16.5V15.5" fill="none" stroke="#707070" stroke-width="1.05"/><rect x="7.1" y="17" width="9.8" height="1.9" fill="#e46c0a"/></svg>
<svg style="position:absolute;left:238.3px;top:120.2px;" width="5" height="8" viewBox="0 0 5 8"><path d="M0 0l4.2 3.8L0 7.6z" fill="#6a6a6a"/></svg>
<div class="t" style="left:38.3px;top:142.24px;font-size:12px;line-height:12px;color:#303030;letter-spacing:-0.122px"><span style="text-decoration:underline;text-underline-offset:2px">Н</span>азвание диаграммы</div>
<svg style="position:absolute;left:8px;top:136px;" width="22" height="24" viewBox="0 0 22 24"><rect x="5.9" y="5.1" width="10" height="1.8" fill="#e46c0a"/><rect x="6.5" y="11.5" width="3.00" height="6.00" fill="#fff"/><path d="M6.5 17.5V11.5H9.5V17.5Z" fill="none" stroke="#707070" stroke-width="1.05"/><rect x="9.5" y="8.5" width="3.00" height="9.00" fill="#bdbdbd"/><path d="M9.5 17.5V8.5H12.5V17.5Z" fill="none" stroke="#707070" stroke-width="1.05"/><rect x="12.5" y="12.5" width="3.00" height="5.00" fill="#fff"/><path d="M12.5 17.5V12.5H15.5V17.5Z" fill="none" stroke="#707070" stroke-width="1.05"/></svg>
<svg style="position:absolute;left:238.3px;top:144.2px;" width="5" height="8" viewBox="0 0 5 8"><path d="M0 0l4.2 3.8L0 7.6z" fill="#6a6a6a"/></svg>
<div class="t" style="left:38.3px;top:166.24px;font-size:12px;line-height:12px;color:#303030;letter-spacing:-0.057px">Подписи данны<span style="text-decoration:underline;text-underline-offset:2px">х</span></div>
<svg style="position:absolute;left:8px;top:160px;" width="22" height="24" viewBox="0 0 22 24"><rect x="6.5" y="11.5" width="3.00" height="6.00" fill="#fff"/><path d="M6.5 17.5V11.5H9.5V17.5Z" fill="none" stroke="#707070" stroke-width="1.05"/><rect x="9.5" y="8.5" width="3.00" height="9.00" fill="#bdbdbd"/><path d="M9.5 17.5V8.5H12.5V17.5Z" fill="none" stroke="#707070" stroke-width="1.05"/><rect x="12.5" y="12.5" width="3.00" height="5.00" fill="#fff"/><path d="M12.5 17.5V12.5H15.5V17.5Z" fill="none" stroke="#707070" stroke-width="1.05"/><rect x="9.8" y="4.7" width="2" height="2" fill="#e46c0a"/><rect x="5.9" y="7.8" width="2" height="2" fill="#e46c0a"/><rect x="14" y="9" width="2" height="2" fill="#e46c0a"/></svg>
<svg style="position:absolute;left:238.3px;top:168.2px;" width="5" height="8" viewBox="0 0 5 8"><path d="M0 0l4.2 3.8L0 7.6z" fill="#6a6a6a"/></svg>
<div class="t" style="left:38.3px;top:190.24px;font-size:12px;line-height:12px;color:#303030;letter-spacing:-0.2px">Та<span style="text-decoration:underline;text-underline-offset:2px">б</span>лица данных</div>
<svg style="position:absolute;left:8px;top:184px;" width="22" height="24" viewBox="0 0 22 24"><path d="M5.4 6V14" stroke="#707070" stroke-width="1.05"/><rect x="7.5" y="9.5" width="3.00" height="5.00" fill="#fff"/><path d="M7.5 14.5V9.5H10.5V14.5" fill="none" stroke="#707070" stroke-width="1.05"/><rect x="10.5" y="6.5" width="3.00" height="8.00" fill="#bdbdbd"/><path d="M10.5 14.5V6.5H13.5V14.5" fill="none" stroke="#707070" stroke-width="1.05"/><rect x="13.5" y="11.5" width="3.00" height="3.00" fill="#fff"/><path d="M13.5 14.5V11.5H16.5V14.5" fill="none" stroke="#707070" stroke-width="1.05"/><rect x="5.1" y="14.1" width="12.8" height="4.5" fill="#fff" stroke="#e46c0a" stroke-width="1.3"/><path d="M5.1 16.4H17.9M11.5 14.1V18.6" stroke="#e46c0a" stroke-width="1.1"/></svg>
<svg style="position:absolute;left:238.3px;top:192.2px;" width="5" height="8" viewBox="0 0 5 8"><path d="M0 0l4.2 3.8L0 7.6z" fill="#6a6a6a"/></svg>
<div class="t" style="left:38.3px;top:214.24px;font-size:12px;line-height:12px;color:#303030;letter-spacing:-0.016px">Пр<span style="text-decoration:underline;text-underline-offset:2px">е</span>дел погрешностей</div>
<svg style="position:absolute;left:8px;top:208px;" width="22" height="24" viewBox="0 0 22 24"><rect x="6.5" y="11.5" width="3.00" height="5.00" fill="#fff"/><path d="M6.5 16.5V11.5H9.5V16.5Z" fill="none" stroke="#707070" stroke-width="1.05"/><rect x="9.5" y="8.5" width="3.00" height="8.00" fill="#bdbdbd"/><path d="M9.5 16.5V8.5H12.5V16.5Z" fill="none" stroke="#707070" stroke-width="1.05"/><rect x="12.5" y="11.5" width="3.00" height="5.00" fill="#fff"/><path d="M12.5 16.5V11.5H15.5V16.5Z" fill="none" stroke="#707070" stroke-width="1.05"/><path d="M11 5.1V7.9M7.5 7.9V10.9M14.4 7.9V10.9" stroke="#e46c0a" stroke-width="1"/></svg>
<svg style="position:absolute;left:238.3px;top:216.2px;" width="5" height="8" viewBox="0 0 5 8"><path d="M0 0l4.2 3.8L0 7.6z" fill="#6a6a6a"/></svg>
<div class="t" style="left:38.3px;top:238.24px;font-size:12px;line-height:12px;color:#303030;letter-spacing:-0.54px"><span style="text-decoration:underline;text-underline-offset:2px">С</span>етка</div>
<svg style="position:absolute;left:8px;top:232px;" width="22" height="24" viewBox="0 0 22 24"><path d="M6 6V16.5" stroke="#e46c0a" stroke-width="0.9" stroke-opacity="0.85"/><path d="M9.3 6V16.5" stroke="#e46c0a" stroke-width="0.9" stroke-opacity="0.85"/><path d="M12.6 6V16.5" stroke="#e46c0a" stroke-width="0.9" stroke-opacity="0.85"/><path d="M15.7 6V16.5" stroke="#e46c0a" stroke-width="0.9" stroke-opacity="0.85"/><path d="M5.1 7.5H16.8" stroke="#e46c0a" stroke-width="0.9" stroke-opacity="0.85"/><path d="M5.1 10.5H16.8" stroke="#e46c0a" stroke-width="0.9" stroke-opacity="0.85"/><path d="M5.1 13.5H16.8" stroke="#e46c0a" stroke-width="0.9" stroke-opacity="0.85"/><rect x="6.5" y="12.5" width="3.00" height="4.00" fill="#fff"/><path d="M6.5 16.5V12.5H9.5V16.5Z" fill="none" stroke="#707070" stroke-width="1.05"/><rect x="9.5" y="9.5" width="3.00" height="7.00" fill="#bdbdbd"/><path d="M9.5 16.5V9.5H12.5V16.5Z" fill="none" stroke="#707070" stroke-width="1.05"/><rect x="12.5" y="13.5" width="3.00" height="3.00" fill="#fff"/><path d="M12.5 16.5V13.5H15.5V16.5Z" fill="none" stroke="#707070" stroke-width="1.05"/></svg>
<svg style="position:absolute;left:238.3px;top:240.2px;" width="5" height="8" viewBox="0 0 5 8"><path d="M0 0l4.2 3.8L0 7.6z" fill="#6a6a6a"/></svg>
<div class="t" style="left:38.3px;top:262.24px;font-size:12px;line-height:12px;color:#303030;letter-spacing:-0.371px">Ле<span style="text-decoration:underline;text-underline-offset:2px">г</span>енда</div>
<svg style="position:absolute;left:8px;top:256px;" width="22" height="24" viewBox="0 0 22 24"><rect x="3.5" y="13.5" width="3.00" height="6.00" fill="#fff"/><path d="M3.5 19.5V13.5H6.5V19.5Z" fill="none" stroke="#707070" stroke-width="1.05"/><rect x="6.5" y="10.5" width="3.00" height="9.00" fill="#bdbdbd"/><path d="M6.5 19.5V10.5H9.5V19.5Z" fill="none" stroke="#707070" stroke-width="1.05"/><rect x="9.5" y="14.5" width="3.00" height="5.00" fill="#fff"/><path d="M9.5 19.5V14.5H12.5V19.5Z" fill="none" stroke="#707070" stroke-width="1.05"/><rect x="11.1" y="4.1" width="7.8" height="8.6" fill="#fff" stroke="#e46c0a" stroke-width="1.3"/><rect x="13" y="5.8" width="1.1" height="1.1" fill="#4a7dc0"/><rect x="13" y="7.9" width="1.1" height="1.1" fill="#d9502e"/><rect x="13" y="10" width="1.1" height="1.1" fill="#5ba086"/><path d="M15 6.35H17.2M15 8.45H17.2M15 10.55H17.2" stroke="#e46c0a" stroke-width="1"/></svg>
<svg style="position:absolute;left:238.3px;top:264.2px;" width="5" height="8" viewBox="0 0 5 8"><path d="M0 0l4.2 3.8L0 7.6z" fill="#6a6a6a"/></svg>
<div class="t" style="left:38.3px;top:286.24px;font-size:12px;line-height:12px;color:#a6a6a6;letter-spacing:0.1px"><span style="text-decoration:underline;text-underline-offset:2px">Л</span>инии</div>
<svg style="position:absolute;left:8px;top:280px;" width="22" height="24" viewBox="0 0 22 24"><path d="M3.5 5.1V18.6H17.7" fill="none" stroke="#c4c4c4" stroke-width="1"/><path d="M5.4 11.4L9.3 7.8L13.5 9.9L17.7 6.3V14.7L13.5 16.5L9.3 13.8L5.4 16.2Z M9.3 7.8V13.8 M13.5 9.9V16.5" fill="none" stroke="#c4c4c4" stroke-width="0.9"/></svg>
<svg style="position:absolute;left:238.3px;top:288.2px;" width="5" height="8" viewBox="0 0 5 8"><path d="M0 0l4.2 3.8L0 7.6z" fill="#c8c8c8"/></svg>
<div class="t" style="left:38.3px;top:310.24px;font-size:12px;line-height:12px;color:#303030;letter-spacing:-0.217px">Линия тренд<span style="text-decoration:underline;text-underline-offset:2px">а</span></div>
<svg style="position:absolute;left:8px;top:304px;" width="22" height="24" viewBox="0 0 22 24"><path d="M3.5 5.1V18.4H17.7" fill="none" stroke="#555" stroke-width="1.05"/><path d="M5.1 15.4Q13.8 14.5 16.5 5.1" fill="none" stroke="#e46c0a" stroke-width="1.1"/><rect x="5.75" y="10.95" width="1.1" height="1.1" fill="#333"/><rect x="8.75" y="11.85" width="1.1" height="1.1" fill="#333"/><rect x="7.85" y="15.75" width="1.1" height="1.1" fill="#333"/><rect x="12.75" y="7.95" width="1.1" height="1.1" fill="#333"/><rect x="14.95" y="12.85" width="1.1" height="1.1" fill="#333"/><rect x="13.85" y="15.75" width="1.1" height="1.1" fill="#333"/><rect x="17.95" y="5.75" width="1.1" height="1.1" fill="#333"/></svg>
<svg style="position:absolute;left:238.3px;top:312.2px;" width="5" height="8" viewBox="0 0 5 8"><path d="M0 0l4.2 3.8L0 7.6z" fill="#6a6a6a"/></svg>
<div class="t" style="left:38.3px;top:334.24px;font-size:12px;line-height:12px;color:#a6a6a6;letter-spacing:0.121px"><span style="text-decoration:underline;text-underline-offset:2px">П</span>олосы повышения и понижения</div>
<svg style="position:absolute;left:8px;top:328px;" width="22" height="24" viewBox="0 0 22 24"><path d="M3.4 5.1V18.5H17.7" fill="none" stroke="#c4c4c4" stroke-width="1"/><path d="M6.1 10.5L9.4 8.3L13.1 12L16.7 8.3V15.6L13.1 12L9.4 15.6L6.1 13.4Z M9.4 8.3V15.6" fill="none" stroke="#c4c4c4" stroke-width="0.9"/></svg>
<svg style="position:absolute;left:238.3px;top:336.2px;" width="5" height="8" viewBox="0 0 5 8"><path d="M0 0l4.2 3.8L0 7.6z" fill="#c8c8c8"/></svg>
<div style="position:absolute;left:251.5px;top:160px;width:326px;height:293.5px;background:#fff;border:1px solid #c6c6c6;box-sizing:border-box;box-shadow:2px 2px 3px rgba(0,0,0,0.18)"></div>
<div style="position:absolute;left:254px;top:426px;width:321.5px;height:1px;background:#e1e1e1"></div>
<div class="t" style="left:305.2px;top:178.24px;font-size:12px;line-height:12px;color:#303030;"><span style="text-decoration:underline;text-underline-offset:2px">Н</span>ет</div>
<svg style="position:absolute;left:262px;top:170px;" width="26" height="28" viewBox="0 0 26 28"><path d="M1.5 26.8V12.5H6.5V26.8" fill="none" stroke="#777" stroke-width="1.1"/><rect x="6.5" y="6.5" width="5.0" height="20.3" fill="#d4d4d4"/><path d="M6.5 26.8V6.5H11.5V26.8" fill="none" stroke="#777" stroke-width="1.1"/><path d="M14.5 26.8V11.5H19.5V26.8" fill="none" stroke="#777" stroke-width="1.1"/><rect x="19.5" y="15.5" width="5.0" height="11.3" fill="#d4d4d4"/><path d="M19.5 26.8V15.5H24.5V26.8" fill="none" stroke="#777" stroke-width="1.1"/><rect x="0.9" y="8.95" width="3.9" height="2.1" fill="#e46c0a"/><rect x="7.2" y="2.95" width="3.6" height="2.1" fill="#e46c0a"/><rect x="15.2" y="7.85" width="3.5" height="2.1" fill="#e46c0a"/><rect x="21.2" y="11.85" width="3.7" height="2.1" fill="#e46c0a"/><path d="M19 -1.3L28.6 7.4M27.7 -0.5L18.7 7.1" stroke="#d9573a" stroke-width="1.9"/></svg>
<div class="t" style="left:305.2px;top:222.24px;font-size:12px;line-height:12px;color:#303030;">В <span style="text-decoration:underline;text-underline-offset:2px">ц</span>ентре</div>
<svg style="position:absolute;left:262px;top:214px;" width="26" height="28" viewBox="0 0 26 28"><path d="M1.5 26.8V12.5H6.5V26.8" fill="none" stroke="#777" stroke-width="1.1"/><rect x="6.5" y="6.5" width="5.0" height="20.3" fill="#d4d4d4"/><path d="M6.5 26.8V6.5H11.5V26.8" fill="none" stroke="#777" stroke-width="1.1"/><path d="M14.5 26.8V11.5H19.5V26.8" fill="none" stroke="#777" stroke-width="1.1"/><rect x="19.5" y="15.5" width="5.0" height="11.3" fill="#d4d4d4"/><path d="M19.5 26.8V15.5H24.5V26.8" fill="none" stroke="#777" stroke-width="1.1"/><rect x="2.1" y="18.95" width="3.7" height="2.1" fill="#e46c0a"/><rect x="7.0" y="15.95" width="3.9" height="2.1" fill="#e46c0a"/><rect x="15.2" y="17.85" width="3.6" height="2.1" fill="#e46c0a"/><rect x="20.0" y="19.75" width="3.9" height="2.1" fill="#e46c0a"/></svg>
<div class="t" style="left:305.2px;top:266.24px;font-size:12px;line-height:12px;color:#303030;"><span style="text-decoration:underline;text-underline-offset:2px">У</span> края, внутри</div>
<svg style="position:absolute;left:262px;top:258px;" width="26" height="28" viewBox="0 0 26 28"><path d="M1.5 26.8V12.5H6.5V26.8" fill="none" stroke="#777" stroke-width="1.1"/><rect x="6.5" y="6.5" width="5.0" height="20.3" fill="#d4d4d4"/><path d="M6.5 26.8V6.5H11.5V26.8" fill="none" stroke="#777" stroke-width="1.1"/><path d="M14.5 26.8V11.5H19.5V26.8" fill="none" stroke="#777" stroke-width="1.1"/><rect x="19.5" y="15.5" width="5.0" height="11.3" fill="#d4d4d4"/><path d="M19.5 26.8V15.5H24.5V26.8" fill="none" stroke="#777" stroke-width="1.1"/><rect x="2.1" y="13.85" width="3.7" height="2.1" fill="#e46c0a"/><rect x="7.0" y="7.85" width="3.9" height="2.1" fill="#e46c0a"/><rect x="15.2" y="12.95" width="3.6" height="2.1" fill="#e46c0a"/><rect x="20.0" y="16.85" width="3.9" height="2.1" fill="#e46c0a"/></svg>
<div class="t" style="left:305.2px;top:310.24px;font-size:12px;line-height:12px;color:#303030;">У <span style="text-decoration:underline;text-underline-offset:2px">о</span>снования, внутри</div>
<svg style="position:absolute;left:262px;top:302px;" width="26" height="28" viewBox="0 0 26 28"><path d="M1.5 26.8V12.5H6.5V26.8" fill="none" stroke="#777" stroke-width="1.1"/><rect x="6.5" y="6.5" width="5.0" height="20.3" fill="#d4d4d4"/><path d="M6.5 26.8V6.5H11.5V26.8" fill="none" stroke="#777" stroke-width="1.1"/><path d="M14.5 26.8V11.5H19.5V26.8" fill="none" stroke="#777" stroke-width="1.1"/><rect x="19.5" y="15.5" width="5.0" height="11.3" fill="#d4d4d4"/><path d="M19.5 26.8V15.5H24.5V26.8" fill="none" stroke="#777" stroke-width="1.1"/><rect x="2.1" y="23.85" width="8.8" height="2.1" fill="#e46c0a"/><rect x="15.2" y="23.85" width="8.7" height="2.1" fill="#e46c0a"/></svg>
<div class="t" style="left:305.2px;top:354.24px;font-size:12px;line-height:12px;color:#303030;"><span style="text-decoration:underline;text-underline-offset:2px">У</span> края, снаружи</div>
<svg style="position:absolute;left:262px;top:346px;" width="26" height="28" viewBox="0 0 26 28"><path d="M1.5 26.8V12.5H6.5V26.8" fill="none" stroke="#777" stroke-width="1.1"/><rect x="6.5" y="6.5" width="5.0" height="20.3" fill="#d4d4d4"/><path d="M6.5 26.8V6.5H11.5V26.8" fill="none" stroke="#777" stroke-width="1.1"/><path d="M14.5 26.8V11.5H19.5V26.8" fill="none" stroke="#777" stroke-width="1.1"/><rect x="19.5" y="15.5" width="5.0" height="11.3" fill="#d4d4d4"/><path d="M19.5 26.8V15.5H24.5V26.8" fill="none" stroke="#777" stroke-width="1.1"/><rect x="0.9" y="8.95" width="3.9" height="2.1" fill="#e46c0a"/><rect x="7.2" y="2.95" width="3.6" height="2.1" fill="#e46c0a"/><rect x="15.2" y="7.85" width="3.5" height="2.1" fill="#e46c0a"/><rect x="21.2" y="11.85" width="3.7" height="2.1" fill="#e46c0a"/></svg>
<div class="t" style="left:305.2px;top:398.24px;font-size:12px;line-height:12px;color:#303030;"><span style="text-decoration:underline;text-underline-offset:2px">В</span>ыноска данных</div>
<svg style="position:absolute;left:262px;top:390px;" width="26" height="28" viewBox="0 0 26 28"><path d="M1.5 26.8V12.5H6.5V26.8" fill="none" stroke="#777" stroke-width="1.1"/><rect x="6.5" y="6.5" width="5.0" height="20.3" fill="#d4d4d4"/><path d="M6.5 26.8V6.5H11.5V26.8" fill="none" stroke="#777" stroke-width="1.1"/><path d="M14.5 26.8V11.5H19.5V26.8" fill="none" stroke="#777" stroke-width="1.1"/><rect x="19.5" y="15.5" width="5.0" height="11.3" fill="#d4d4d4"/><path d="M19.5 26.8V15.5H24.5V26.8" fill="none" stroke="#777" stroke-width="1.1"/><path d="M8 0h5v2.8h-2.2l-1.6 2.4v-2.4h-1.2z" fill="#e46c0a"/></svg>
<div class="t" style="left:284.2px;top:434.24px;font-size:12px;line-height:12px;color:#303030;">Дополнительные п<span style="text-decoration:underline;text-underline-offset:2px">а</span>раметры подписей данных...</div>
<svg style="position:absolute;left:0;top:0" width="871" height="731" viewBox="0 0 871 731"><defs><filter id="sh" x="-30%" y="-30%" width="160%" height="160%"><feGaussianBlur in="SourceAlpha" stdDeviation="3.2"/><feOffset dx="2" dy="5"/><feComponentTransfer><feFuncA type="linear" slope="0.5"/></feComponentTransfer><feMerge><feMergeNode/><feMergeNode in="SourceGraphic"/></feMerge></filter></defs><g filter="url(#sh)"><path d="M306.9 86.7 L208.5 156.3" stroke="#fb4148" stroke-width="10.6" stroke-linecap="round"/><path d="M184 173.9 L199.4 144.6 L217 168.7 z" fill="#fb4148"/></g></svg>
<svg style="position:absolute;left:0;top:0" width="871" height="731" viewBox="0 0 871 731"><g opacity="0.75"><rect x="22.5" y="655.8" width="63.5" height="49" rx="5" fill="rgba(240,240,240,0.35)" stroke="#cdcdcd" stroke-width="1.2"/><rect x="26.2" y="659.3" width="56" height="42" rx="4" fill="none" stroke="#a3a3a3" stroke-width="3.6"/><path d="M53.7 685.3 L37 668.5" stroke="#a0a0a0" stroke-width="3.2" stroke-linecap="round"/><path d="M31.2 662.9 L36 676 L45.5 667.8z" fill="#a0a0a0"/><rect x="42" y="704.5" width="21" height="4.5" rx="2" fill="#eaeaea" stroke="#c4c4c4" stroke-width="1"/></g><path d="M96.6 676.8 Q96.6 671.4 102 671.4 H110.8 Q116.2 671.4 116.2 676.8 V684.6 Q116.2 690 110.8 690 H102 Q96.6 690 96.6 684.6 Z M142.6 671.4 H129.3 Q124.1 671.4 124.1 676.3 Q124.1 681 129.3 681 H137.6 Q142.6 681 142.6 685.5 Q142.6 690 137.6 690 H124.1" fill="none" stroke="#ffffff" stroke-opacity="0.7" stroke-width="9.5" stroke-linejoin="round"/><path d="M160.8 670.8 V689.4 M181.8 670.8 V689.4 M160.8 680.2 H181.8 M189 684.5 H208.2 Q208.2 679.7 203.5 679.7 H193.7 Q189 679.7 189 684.5 Q189 689.4 193.7 689.4 H207.8 M215.1 670.8 V689.4 M221 695.5 V684.5 Q221 679.7 225.8 679.7 H234 Q238.8 679.7 238.8 684.5 Q238.8 689.4 234 689.4 H221 M246 684.5 H263.2 Q263.2 679.7 258.5 679.7 H250.7 Q246 679.7 246 684.5 Q246 689.4 250.7 689.4 H263 M269.3 689.4 V684.5 Q269.3 679.7 274 679.7 H278" fill="none" stroke="#ffffff" stroke-opacity="0.7" stroke-width="9.5" stroke-linejoin="round"/><path d="M96.6 676.8 Q96.6 671.4 102 671.4 H110.8 Q116.2 671.4 116.2 676.8 V684.6 Q116.2 690 110.8 690 H102 Q96.6 690 96.6 684.6 Z M142.6 671.4 H129.3 Q124.1 671.4 124.1 676.3 Q124.1 681 129.3 681 H137.6 Q142.6 681 142.6 685.5 Q142.6 690 137.6 690 H124.1" fill="none" stroke="#c4c4c4" stroke-width="7.2" stroke-linejoin="round"/><path d="M160.8 670.8 V689.4 M181.8 670.8 V689.4 M160.8 680.2 H181.8 M189 684.5 H208.2 Q208.2 679.7 203.5 679.7 H193.7 Q189 679.7 189 684.5 Q189 689.4 193.7 689.4 H207.8 M215.1 670.8 V689.4 M221 695.5 V684.5 Q221 679.7 225.8 679.7 H234 Q238.8 679.7 238.8 684.5 Q238.8 689.4 234 689.4 H221 M246 684.5 H263.2 Q263.2 679.7 258.5 679.7 H250.7 Q246 679.7 246 684.5 Q246 689.4 250.7 689.4 H263 M269.3 689.4 V684.5 Q269.3 679.7 274 679.7 H278" fill="none" stroke="#c8c8c8" stroke-width="7.2" stroke-linejoin="round"/><path d="M96.6 676.8 Q96.6 671.4 102 671.4 H110.8 Q116.2 671.4 116.2 676.8 V684.6 Q116.2 690 110.8 690 H102 Q96.6 690 96.6 684.6 Z M142.6 671.4 H129.3 Q124.1 671.4 124.1 676.3 Q124.1 681 129.3 681 H137.6 Q142.6 681 142.6 685.5 Q142.6 690 137.6 690 H124.1" fill="none" stroke="#fbb7c3" stroke-width="5.2" stroke-linejoin="round"/><path d="M160.8 670.8 V689.4 M181.8 670.8 V689.4 M160.8 680.2 H181.8 M189 684.5 H208.2 Q208.2 679.7 203.5 679.7 H193.7 Q189 679.7 189 684.5 Q189 689.4 193.7 689.4 H207.8 M215.1 670.8 V689.4 M221 695.5 V684.5 Q221 679.7 225.8 679.7 H234 Q238.8 679.7 238.8 684.5 Q238.8 689.4 234 689.4 H221 M246 684.5 H263.2 Q263.2 679.7 258.5 679.7 H250.7 Q246 679.7 246 684.5 Q246 689.4 250.7 689.4 H263 M269.3 689.4 V684.5 Q269.3 679.7 274 679.7 H278" fill="none" stroke="#f8f8f8" stroke-width="5.2" stroke-linejoin="round"/></svg>
<div style="position:absolute;left:0px;top:0px;width:1.2px;height:731px;background:#2b579a"></div>
<div style="position:absolute;left:869.5px;top:0px;width:1.5px;height:731px;background:#2b579a"></div>
</body></html>
